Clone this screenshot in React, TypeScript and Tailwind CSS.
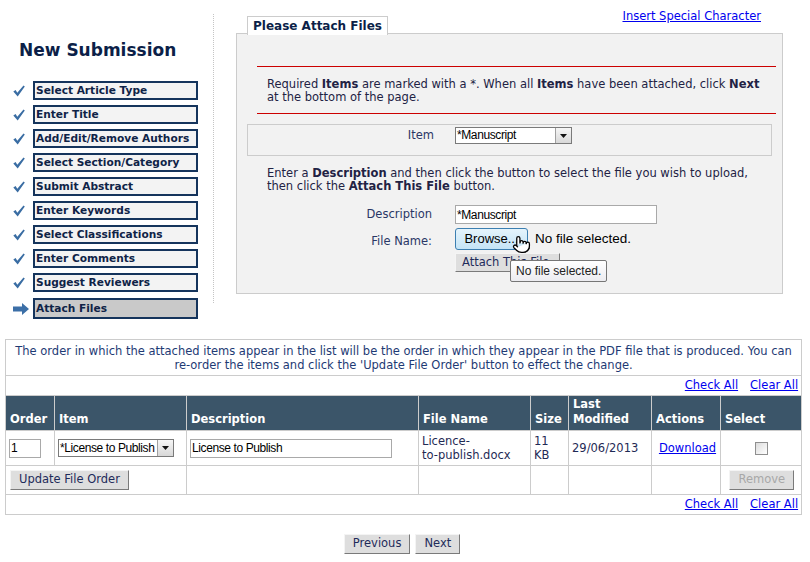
import { Pointer } from 'lucide-react';

// ─── Small building blocks ────────────────────────────────────────────────────
function Check() {
  return (
    <svg width="12" height="12" viewBox="0 0 12 12" className="shrink-0">
      <path d="M0.3 6.4 L2.6 5 L4.3 7.8 L10.5 0.6 L11.8 1.6 L4.7 11.4 Z" fill="#3a6da3" />
    </svg>
  );
}

function Arrow() {
  return (
    <svg width="16" height="12" viewBox="0 0 16 12" className="shrink-0">
      <path d="M0 3.5 H9 V0 L16 6 L9 12 V8.5 H0 Z" fill="#3c6fa7" />
    </svg>
  );
}

function DropArrow() {
  return (
    <span className="flex h-full w-[16px] items-center justify-center border-l border-[#a0a0a0] bg-gradient-to-b from-[#f6f6f6] to-[#d8d8d8]">
      <svg width="7" height="4" viewBox="0 0 7 4">
        <path d="M0 0 H7 L3.5 4 Z" fill="#111" />
      </svg>
    </span>
  );
}

function Button({ children, disabled }: { children: React.ReactNode; disabled?: boolean }) {
  return (
    <button
      className={`h-[20px] border border-t-[#f4f4f4] border-l-[#f4f4f4] border-r-[#7a7a7a] border-b-[#7a7a7a] bg-[#dedede] px-[8px] leading-none ${
        disabled ? 'text-[#a8a8a8]' : 'text-[#1e2b5a]'
      }`}
    >
      {children}
    </button>
  );
}

const steps = [
  'Select Article Type',
  'Enter Title',
  'Add/Edit/Remove Authors',
  'Select Section/Category',
  'Submit Abstract',
  'Enter Keywords',
  'Select Classifications',
  'Enter Comments',
  'Suggest Reviewers',
];

// ─── Sidebar ──────────────────────────────────────────────────────────────────
function Sidebar() {
  return (
    <div className="flex w-[213px] shrink-0 flex-col">
      <h1 className="ml-[19px] mt-[40px] text-[17px] font-bold leading-[20px] text-[#0c1f48]">New Submission</h1>
      <div className="mt-[21px] flex flex-col gap-[5px]">
        {steps.map((s) => (
          <div key={s} className="flex items-center gap-[8px] pl-[13px]">
            <Check />
            <div className="h-[19px] w-[165px] border-2 border-[#15345c] bg-[#f3f3f3] pl-[1px] text-[10.6px] font-bold leading-[15px] text-[#0f2347]">
              {s}
            </div>
          </div>
        ))}
        <div className="mt-[1px] flex items-center gap-[4px] pl-[13px]">
          <Arrow />
          <div className="h-[21px] w-[165px] border-2 border-[#15345c] bg-[#c9c9c9] pl-[1px] text-[10.6px] font-bold leading-[17px] text-[#0f2347]">
            Attach Files
          </div>
        </div>
      </div>
    </div>
  );
}

// ─── Attach panel ─────────────────────────────────────────────────────────────
function AttachPanel() {
  return (
    <div className="ml-[22px] w-[547px]">
      <div className="flex h-[34px] justify-between">
        <div className="relative z-10 ml-[11px] mt-[16px] h-[19px] border border-b-0 border-[#cccccc] bg-white px-[5px] text-[12px] font-bold leading-[18px] text-[#0c1f48]">
          Please Attach Files
        </div>
        <a href="#" className="mr-[22px] mt-[9px] text-[11.5px] leading-[14px] text-[#0000ee] underline">
          Insert Special Character
        </a>
      </div>
      <div className="-mt-[1px] h-[261px] border border-[#cccccc] bg-[#f2f2f2] text-[#222244]">
        <div className="ml-[20px] mr-[6px] mt-[32px] border-t border-[#cc0000]" />
        <p className="ml-[30px] mr-[12px] mt-[11px] text-[11.5px] leading-[13px]">
          Required <b>Items</b> are marked with a *. When all <b>Items</b> have been attached, click <b>Next</b> at the
          bottom of the page.
        </p>
        <div className="ml-[20px] mr-[6px] mt-[9px] border-t border-[#cc0000]" />
        <div className="mx-[10px] mt-[10px] flex h-[32px] items-start border border-[#cccccc] pt-[2px]">
          <span className="w-[186px] text-right text-[11.5px] leading-[16px] text-[#2a3766]">Item</span>
          <span className="ml-[21px] flex h-[17px] w-[117px] items-stretch border border-[#7a7a7a] bg-white">
            <span className="flex-1 pl-[1px] font-['Liberation_Sans',Arial,sans-serif] text-[12px] leading-[15px] tracking-[-0.4px] text-black">
              *Manuscript
            </span>
            <DropArrow />
          </span>
        </div>
        <p className="ml-[30px] mr-[12px] mt-[11px] text-[11.5px] leading-[13px]">
          Enter a <b>Description</b> and then click the button to select the file you wish to upload, then click the{' '}
          <b>Attach This File</b> button.
        </p>
        <div className="mt-[12px] grid grid-cols-[195px_1fr] gap-x-[23px] text-[11.5px] text-[#2a3766]">
          <span className="pt-[1px] text-right leading-[16px]">Description</span>
          <span className="flex h-[19px] w-[202px] items-center border border-[#a9a9a9] bg-white pl-[1px] font-['Liberation_Sans',Arial,sans-serif] text-[12px] tracking-[-0.4px] text-black">
            *Manuscript
          </span>
          <span className="mt-[4px] pt-[5px] text-right leading-[16px]">File Name:</span>
          <div className="relative mt-[4px] flex flex-col items-start">
            <div className="flex items-center gap-[7px]">
              <span className="flex h-[22px] w-[73px] items-center justify-center rounded-[3px] border border-[#3c7fb1] bg-gradient-to-b from-[#e5f4fc] to-[#c4e4f6] font-['Liberation_Sans',Arial,sans-serif] text-[13px] text-black">
                Browse...
              </span>
              <span className="font-['Liberation_Sans',Arial,sans-serif] text-[13.5px] text-black">No file selected.</span>
            </div>
            <div className="mt-[3px]">
              <span className="flex h-[19px] w-[105px] items-center border border-t-[#f4f4f4] border-l-[#f4f4f4] border-r-[#7a7a7a] border-b-[#7a7a7a] bg-[#dedede] px-[6px] text-[11.5px] whitespace-nowrap text-[#1e2b5a]">
                Attach This File
              </span>
            </div>
            <Pointer
              size={19}
              strokeWidth={1.6}
              fill="white"
              color="black"
              className="absolute left-[57px] top-[7px]"
            />
            <div className="absolute left-[55px] top-[32px] flex h-[22px] items-center rounded-[2px] border border-[#767676] bg-gradient-to-b from-white to-[#ececf0] px-[5px] font-['Liberation_Sans',Arial,sans-serif] text-[12px] whitespace-nowrap text-[#222]">
              No file selected.
            </div>
          </div>
        </div>
      </div>
    </div>
  );
}

// ─── Files table ──────────────────────────────────────────────────────────────
function LinksRow() {
  return (
    <tr className="h-[20px]">
      <td colSpan={8} className="border border-[#cccccc] pr-[3px] text-right text-[11.5px]">
        <a href="#" className="text-[#0000ee] underline">Check All</a>
        <a href="#" className="ml-[12px] text-[#0000ee] underline">Clear All</a>
      </td>
    </tr>
  );
}

function FilesTable() {
  const th = 'border border-[#cccccc] px-[4px] pb-[3px] text-left align-bottom font-bold leading-[15px]';
  const td = 'border border-[#cccccc] px-[3px] align-middle';
  return (
    <table className="mx-[5px] mt-[20px] w-[796px] table-fixed border-collapse text-[11.5px] text-[#1f2a55]">
      <colgroup>
        <col className="w-[49px]" />
        <col className="w-[132px]" />
        <col className="w-[232px]" />
        <col className="w-[112px]" />
        <col className="w-[38px]" />
        <col className="w-[83px]" />
        <col className="w-[69px]" />
        <col className="w-[81px]" />
      </colgroup>
      <tbody>
        <tr className="h-[36px]">
          <td colSpan={8} className="border border-[#cccccc] px-[8px] text-center leading-[14px] text-[#1e3a74]">
            The order in which the attached items appear in the list will be the order in which they appear in the PDF
            file that is produced. You can re-order the items and click the 'Update File Order' button to effect the
            change.
          </td>
        </tr>
        <LinksRow />
        <tr className="h-[35px] bg-[#3b5569] text-white">
          <th className={th}>Order</th>
          <th className={th}>Item</th>
          <th className={th}>Description</th>
          <th className={th}>File Name</th>
          <th className={th}>Size</th>
          <th className={th}>Last Modified</th>
          <th className={th}>Actions</th>
          <th className={th}>Select</th>
        </tr>
        <tr className="h-[35px] leading-[14px]">
          <td className={td}>
            <span className="flex h-[19px] w-[32px] items-center border border-[#a9a9a9] bg-white pl-[1px] font-['Liberation_Sans',Arial,sans-serif] text-[12px] text-black">
              1
            </span>
          </td>
          <td className={td}>
            <span className="flex h-[18px] w-[116px] items-stretch border border-[#7a7a7a] bg-white">
              <span className="flex-1 overflow-hidden whitespace-nowrap pl-[1px] font-['Liberation_Sans',Arial,sans-serif] text-[12px] leading-[16px] tracking-[-0.4px] text-black">
                *License to Publish
              </span>
              <DropArrow />
            </span>
          </td>
          <td className={td}>
            <span className="flex h-[19px] w-[202px] items-center border border-[#a9a9a9] bg-white pl-[1px] font-['Liberation_Sans',Arial,sans-serif] text-[12px] tracking-[-0.4px] text-black">
              License to Publish
            </span>
          </td>
          <td className={td}>
            Licence-
            <br />
            to-publish.docx
          </td>
          <td className={td}>
            11
            <br />
            KB
          </td>
          <td className={td}>29/06/2013</td>
          <td className={`${td} pl-[6px] text-center`}>
            <a href="#" className="text-[#0000ee] underline">Download</a>
          </td>
          <td className={`${td} text-center`}>
            <span className="inline-block h-[13px] w-[13px] border border-[#8f8f8f] bg-gradient-to-br from-[#dcdcdc] to-white align-middle" />
          </td>
        </tr>
        <tr className="h-[29px]">
          <td colSpan={2} className={`${td} pl-[4px]`}>
            <Button>Update File Order</Button>
          </td>
          <td className={td} />
          <td className={td} />
          <td className={td} />
          <td className={td} />
          <td className={td} />
          <td className={`${td} pr-[7px] text-right`}>
            <Button disabled>Remove</Button>
          </td>
        </tr>
        <LinksRow />
      </tbody>
    </table>
  );
}

// ─── App Component ────────────────────────────────────────────────────────────
export default function App() {
  return (
    <div className="h-[562px] w-[810px] overflow-hidden bg-white font-['DejaVu_Sans',Verdana,sans-serif] text-[11.5px]">
      <div className="flex">
        <Sidebar />
        <div className="mt-[14px] h-[289px] border-l border-dotted border-[#c4c4c4]" />
        <AttachPanel />
      </div>
      <FilesTable />
      <div className="mt-[19px] flex justify-center gap-[5px] pr-[6px] text-[11.5px]">
        <Button>Previous</Button>
        <Button>Next</Button>
      </div>
    </div>
  );
}
